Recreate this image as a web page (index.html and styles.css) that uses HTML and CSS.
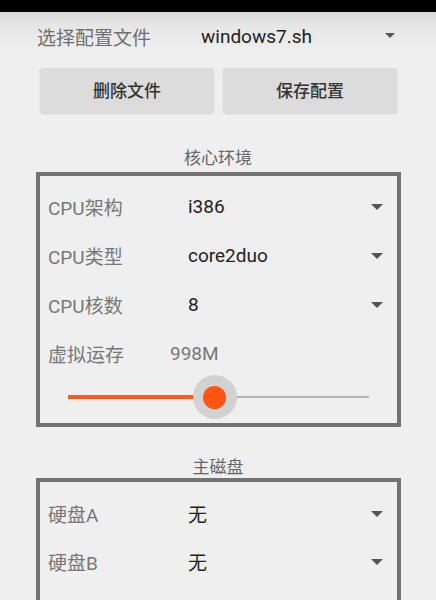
FILE: index.html
```html
<!DOCTYPE html>
<html lang="zh-CN">
<head>
<meta charset="utf-8">
<title>配置</title>
<link rel="stylesheet" href="styles.css">
</head>
<body>
<div class="status"></div>
<header class="file-row">
  <span class="file-label">选择配置文件</span>
  <span class="file-value">windows7.sh</span>
  <svg class="arrow arrow-top" viewBox="0 0 10 5" width="10" height="5"><polygon points="0,0 10,0 5,5"/></svg>
</header>
<div class="actions">
  <button class="btn">删除文件</button>
  <button class="btn">保存配置</button>
</div>

<section class="group group-core">
  <h2 class="group-title">核心环境</h2>
  <div class="box box-core">
    <div class="row">
      <span class="label">CPU架构</span>
      <span class="value">i386</span>
      <svg class="arrow" viewBox="0 0 12 6" width="12" height="6"><polygon points="0,0 12,0 6,6"/></svg>
    </div>
    <div class="row">
      <span class="label">CPU类型</span>
      <span class="value">core2duo</span>
      <svg class="arrow" viewBox="0 0 12 6" width="12" height="6"><polygon points="0,0 12,0 6,6"/></svg>
    </div>
    <div class="row">
      <span class="label">CPU核数</span>
      <span class="value">8</span>
      <svg class="arrow" viewBox="0 0 12 6" width="12" height="6"><polygon points="0,0 12,0 6,6"/></svg>
    </div>
    <div class="row">
      <span class="label label-short">虚拟运存</span>
      <span class="value value-muted">998M</span>
    </div>
    <div class="slider">
      <div class="track-fill" style="width: 48.8%"></div>
      <div class="track-rest"></div>
      <div class="thumb" style="left: 48.8%"><span class="thumb-dot"></span></div>
    </div>
  </div>
</section>

<section class="group group-disk">
  <h2 class="group-title">主磁盘</h2>
  <div class="box box-disk">
    <div class="row row-disk">
      <span class="label">硬盘A</span>
      <span class="value">无</span>
      <svg class="arrow" viewBox="0 0 12 6" width="12" height="6"><polygon points="0,0 12,0 6,6"/></svg>
    </div>
    <div class="row row-disk">
      <span class="label">硬盘B</span>
      <span class="value">无</span>
      <svg class="arrow" viewBox="0 0 12 6" width="12" height="6"><polygon points="0,0 12,0 6,6"/></svg>
    </div>
  </div>
</section>
</body>
</html>
```
FILE: styles.css
```css
* { box-sizing: border-box; }

html, body {
  margin: 0;
  padding: 0;
}

body {
  width: 436px;
  height: 600px;
  overflow: hidden;
  background: #efefef;
  font-family: Roboto, "Noto Sans CJK SC", sans-serif;
  color: #222;
}

.status {
  height: 12px;
  background: #000;
}

.file-row {
  display: flex;
  align-items: center;
  height: 52px;
  padding: 0 41px 4px 37px;
  background: linear-gradient(#d7d7d7 0%, #e6e6e6 25%, #eeeeee 70%, #efefef 100%);
}

.file-label {
  width: 164px;
  font-size: 19px;
  color: #6e6e6e;
}

.file-value {
  font-size: 19px;
  color: #222;
}

.arrow {
  margin-left: auto;
  fill: #555;
  display: block;
}

.arrow-top {
  margin-top: -2px;
}

.actions {
  display: flex;
  gap: 9px;
  padding: 0 39px 0 40px;
  margin-top: 4px;
}

.btn {
  flex: 1;
  height: 45px;
  border: none;
  border-radius: 3px;
  background: #dcdcdc;
  box-shadow: 0 1px 2px rgba(0, 0, 0, 0.12);
  font-family: Roboto, "Noto Sans CJK SC", sans-serif;
  font-size: 17px;
  font-weight: 500;
  color: #333;
  padding: 0 0 2px;
}

.group-title {
  margin: 0;
  text-align: center;
  font-size: 17px;
  font-weight: 400;
  line-height: 22px;
  height: 22px;
  color: #666;
}

.group-core {
  margin-top: 34px;
}

.group-disk {
  margin-top: 29px;
}

.box {
  margin: 0 35px 0 36px;
  border: 4px solid #737373;
}

.box-core {
  margin-top: 3px;
  padding: 8px 14px 9px 8px;
}

.box-disk {
  padding: 10px 14px 40px 8px;
}

.row {
  display: flex;
  align-items: center;
  height: 49px;
  padding-bottom: 4px;
}

.row-disk {
  height: 48px;
  padding-bottom: 5px;
}

.label {
  width: 140px;
  font-size: 19px;
  color: #777;
}

.label-short {
  width: 122px;
}

.value {
  font-size: 19px;
  color: #222;
}

.value-muted {
  color: #777;
}

.slider {
  position: relative;
  display: flex;
  align-items: center;
  height: 34px;
  margin: 0 14px 0 20px;
}

.track-fill {
  height: 4px;
  background: #ff5a1a;
}

.track-rest {
  flex: 1;
  height: 2px;
  background: #b4b4b4;
}

.thumb {
  position: absolute;
  top: 50%;
  width: 44px;
  height: 44px;
  margin: -22px 0 0 -22px;
  border-radius: 50%;
  background: #d2d2d2;
  display: flex;
  align-items: center;
  justify-content: center;
}

.thumb-dot {
  width: 23px;
  height: 23px;
  border-radius: 50%;
  background: #ff5414;
}
```
